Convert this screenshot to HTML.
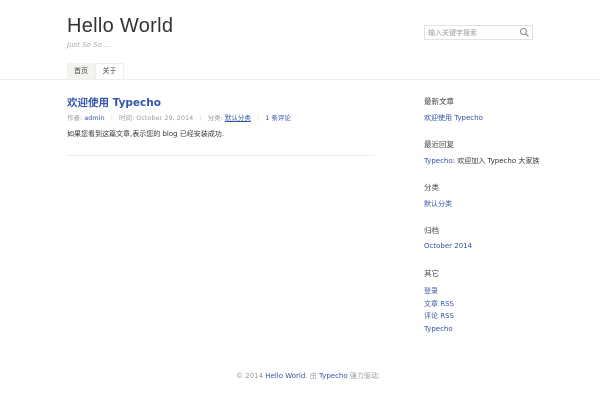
<!DOCTYPE html>
<html><head><meta charset="utf-8"><style>
*{margin:0;padding:0;box-sizing:border-box}
body{width:600px;height:400px;background:#fff;font-family:"DejaVu Sans","Liberation Sans","Noto Sans CJK SC",sans-serif;color:#444;position:relative;overflow:hidden}
.a{position:absolute;white-space:nowrap}
a,.l{color:#3354aa;text-decoration:none}
.g{color:#999}
</style></head><body>
<div class="a" style="left:67px;top:15px;font-size:20px;font-weight:normal;color:#333;font-family:'Liberation Sans',sans-serif;letter-spacing:0.3px">Hello World</div>
<div class="a g" style="left:67px;top:41px;font-size:7px;font-style:italic;color:#aaa">Just So So ...</div>
<div class="a" style="left:424px;top:25px;width:109px;height:15px;border:1px solid #e3e3e3"></div>
<div class="a" style="left:428px;top:28px;font-size:7px;color:#999">输入关键字搜索</div>
<svg class="a" style="left:519px;top:27px" width="11" height="11" viewBox="0 0 11 11"><circle cx="4.5" cy="4.5" r="3" fill="none" stroke="#888" stroke-width="1"/><line x1="6.7" y1="6.7" x2="9.5" y2="9.5" stroke="#888" stroke-width="1.2"/></svg>
<div class="a" style="left:67px;top:63px;width:28px;height:16px;background:#f3f3f0;font-size:7px;text-align:center;line-height:16px;color:#444">首页</div>
<div class="a" style="left:95px;top:63px;width:29px;height:17px;background:#fff;border:1px solid #eee;border-bottom:none;font-size:7px;text-align:center;line-height:15px;color:#444">关于</div>
<div class="a" style="left:0;top:79px;width:600px;height:1px;background:#eee"></div>
<div class="a l" style="left:67px;top:95px;font-size:10.5px;font-weight:bold;color:#3354aa">欢迎使用 Typecho</div>
<div class="a g" style="left:67px;top:112px;font-size:6.5px">作者: <span class="l">admin</span> <span style="color:#ddd;margin:0 4px">|</span> 时间: October 29, 2014 <span style="color:#ddd;margin:0 4px">|</span> 分类: <span class="l" style="text-decoration:underline">默认分类</span> <span style="color:#ddd;margin:0 4px">|</span> <span class="l">1 条评论</span></div>
<div class="a" style="left:67px;top:129px;font-size:7px;color:#333">如果您看到这篇文章,表示您的 blog 已经安装成功.</div>
<div class="a" style="left:67px;top:155px;width:308px;height:1px;background:#eee"></div>
<div class="a" style="left:424px;top:96px;font-size:7.5px;color:#444">最新文章</div>
<div class="a l" style="left:424px;top:113px;font-size:7px">欢迎使用 Typecho</div>
<div class="a" style="left:424px;top:139px;font-size:7.5px;color:#444">最近回复</div>
<div class="a" style="left:424px;top:156px;font-size:7px;color:#333"><span class="l">Typecho</span>: 欢迎加入 Typecho 大家族</div>
<div class="a" style="left:424px;top:182px;font-size:7.5px;color:#444">分类</div>
<div class="a l" style="left:424px;top:199px;font-size:7px">默认分类</div>
<div class="a" style="left:424px;top:225px;font-size:7.5px;color:#444">归档</div>
<div class="a l" style="left:424px;top:242px;font-size:7px">October 2014</div>
<div class="a" style="left:424px;top:268px;font-size:7.5px;color:#444">其它</div>
<div class="a l" style="left:424px;top:285px;font-size:7px;line-height:12.5px">登录<br>文章 RSS<br>评论 RSS<br>Typecho</div>
<div class="a g" style="left:236px;top:371px;font-size:7px">© 2014 <span class="l">Hello World</span>. 由 <span class="l">Typecho</span> 强力驱动.</div>
</body></html>
